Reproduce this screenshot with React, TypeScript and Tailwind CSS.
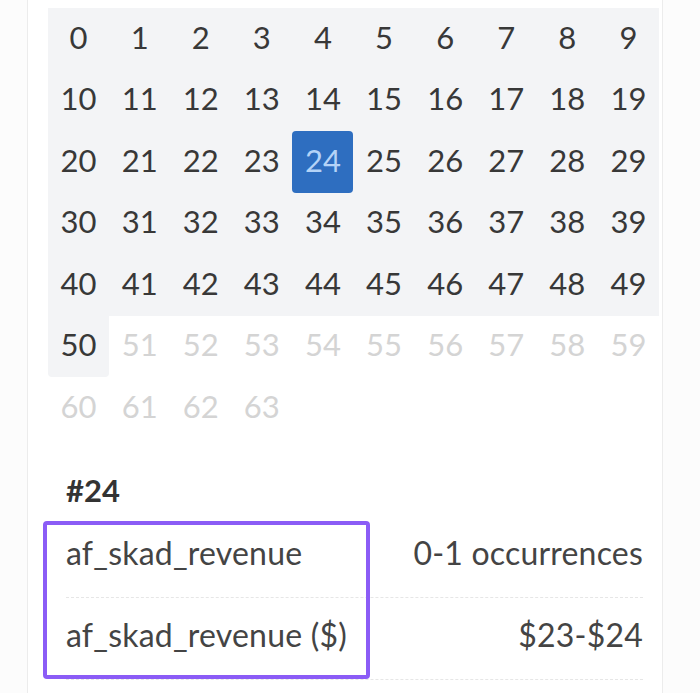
import React from "react";

const SELECTED = 24;

export default function App() {
  const cells = Array.from({ length: 64 }, (_, i) => i);
  return (
    <div
      className="w-[700px] h-[693px] overflow-hidden bg-[#fcfcfc] pl-[27px]"
      style={{ fontFamily: "Lato, 'Open Sans', sans-serif" }}
    >
      <div className="w-[636px] h-[700px] bg-white border-x border-[#ececec] pl-[20px] pt-[8px]">
        <div className="grid grid-cols-10 w-[611px] auto-rows-[61.5px]">
          {cells.map((n) => {
            const active = n <= 50;
            const sel = n === SELECTED;
            return (
              <div
                key={n}
                className={
                  "flex items-center justify-center text-[31px] leading-none " +
                  (active ? "bg-[#f3f4f6] text-[#383838] " : "bg-white text-[#d4d4d4] ") +
                  (n === 50 ? "rounded-bl-[4px] rounded-br-[4px] " : "")
                }
              >
                {sel ? (
                  <div className="w-full h-full rounded-[4px] bg-[#2e6ec0] text-[#b4d3f7] flex items-center justify-center pb-[3px]">
                    {n}
                  </div>
                ) : (
                  <span className="pb-[3px]">{n}</span>
                )}
              </div>
            );
          })}
        </div>
        <div className="ml-[18px] mt-[36px] w-[577px]">
          <div className="text-[31px] font-bold text-[#333] leading-none">#24</div>
          <div className="relative mt-[10px]">
            <div className="flex items-center justify-between h-[82px] pb-[6px] border-b border-dashed border-[#e6e6e6] text-[32px] tracking-[0.2px] text-[#444] leading-none">
              <span>af_skad_revenue</span>
              <span>0-1 occurrences</span>
            </div>
            <div className="flex items-center justify-between h-[82px] pb-[6px] border-b border-dashed border-[#e6e6e6] text-[32px] tracking-[0.2px] text-[#444] leading-none">
              <span>af_skad_revenue ($)</span>
              <span>$23-$24</span>
            </div>
            <div className="absolute left-[-23px] top-[5px] w-[327px] h-[158px] border-[4px] border-[#8b5cf6] rounded-[4px]" />
          </div>
        </div>
      </div>
    </div>
  );
}
